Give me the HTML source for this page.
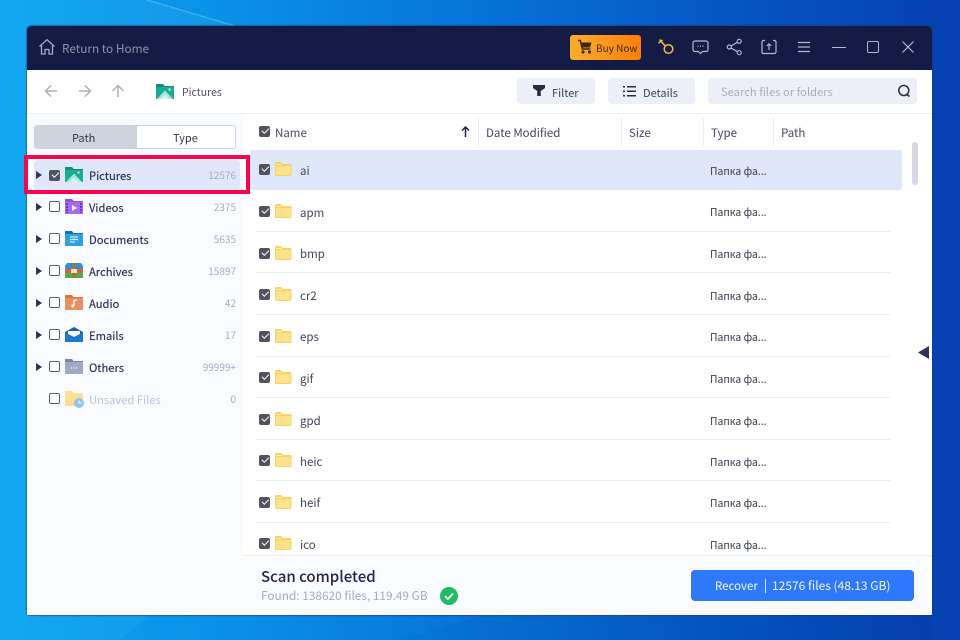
<!DOCTYPE html>
<html><head><meta charset="utf-8">
<style>
*{box-sizing:border-box;margin:0;padding:0}
html,body{width:960px;height:640px;overflow:hidden}
body{position:relative;font-family:"Noto Sans CJK SC","Liberation Sans",sans-serif;font-size:11.5px;color:#2f3350;background:linear-gradient(90deg,#0aa6f2 0%,#0a8fe6 25%,#0673d8 50%,#0557c4 75%,#063fb0 100%)}
.a{position:absolute;white-space:nowrap}
svg{position:absolute;display:block}
.t{line-height:16px;height:16px}
.cb{position:absolute;width:11px;height:11px;border-radius:2px;border:1.3px solid #5f6070;background:#fff}
.cb.on{background:#53535f;border-color:#53535f}
.cb.on:after{content:"";position:absolute;left:1.6px;top:1.2px;width:6px;height:3.2px;border-left:1.6px solid #fff;border-bottom:1.6px solid #fff;transform:rotate(-45deg)}
.tri{position:absolute;width:0;height:0;border-left:6px solid #2b3157;border-top:4px solid transparent;border-bottom:4px solid transparent}
.cnt{position:absolute;right:724px;text-align:right;color:#a5a9c6;font-size:10px;line-height:16px}
.lb{font-size:11.2px;color:#2a2e52;-webkit-text-stroke:.15px #2a2e52}
.ln{position:absolute;left:255px;width:635px;height:1px;background:#e8ecf6}
.hd{color:#4f546c;font-size:11.5px;-webkit-text-stroke:.1px #4f546c}
.sep{position:absolute;width:1px;height:28px;top:118px;background:#e9edf4}
.ty{position:absolute;left:710px;color:#474b59;font-size:10.4px;line-height:16px;-webkit-text-stroke:.1px #474b59}
.nm{position:absolute;left:300px;color:#404459;font-size:11.5px;line-height:16px}
</style></head><body>

<svg style="left:0;top:0" width="960" height="640" viewBox="0 0 960 640"><path d="M0 0H147L235 26H27V615H150L120 640H0z" fill="#fff" opacity=".04"/><path d="M147 0 235 26" stroke="#7fd0fa" stroke-width="1.500" opacity=".4" fill="none"/><path d="M400 640 480 615H932V640z" fill="#000" opacity=".03"/></svg>

<div class="a" style="left:27px;top:26px;width:905px;height:589px;background:#fff;border-radius:4px 4px 2px 2px;box-shadow:0 0 1px 1px rgba(40,50,110,.55);overflow:hidden">
</div>
<div class="a" style="left:27px;top:26px;width:905px;height:44px;background:#141c46;border-radius:4px 4px 0 0"></div>

<!-- title bar -->
<svg style="left:38px;top:38px" width="18" height="18" viewBox="0 0 18 18" fill="none" stroke="#a8adc4" stroke-width="1.3"><path d="M1.5 8.5 9 1.7l7.500 6.800M3.500 7.500V16h3.500v-4.500h4V16h3.500V7.500"/></svg>
<div class="a t" style="left:62px;top:41px;color:#8d92ab;font-size:11.8px">Return to Home</div>

<div class="a" style="left:570px;top:35px;width:71px;height:25px;border-radius:3px;background:linear-gradient(90deg,#fcae2a,#fb7d0c)"></div>
<svg style="left:577px;top:39px" width="16" height="16" viewBox="0 0 16 16"><path d="M1 1.500h2.300l2 8.500h8" fill="none" stroke="#3a2a10" stroke-width="1.500"/><path d="M4 3.500h10.500l-1.500 5H5z" fill="#3a2a10"/><circle cx="6" cy="13" r="1.600" fill="#3a2a10"/><circle cx="12.500" cy="13" r="1.600" fill="#3a2a10"/></svg>
<div class="a t" style="left:596px;top:40px;color:#40290c;font-size:10px">Buy Now</div>

<svg style="left:657px;top:38px" width="18" height="18" viewBox="0 0 18 18" fill="none" stroke="#f0b64a" stroke-width="1.500"><circle cx="11.500" cy="11" r="4.300"/><path d="M2.500 1.500 8.200 8M1.500 5 5.500 2"/></svg>
<svg style="left:692px;top:40px" width="17" height="15" viewBox="0 0 17 15" fill="none" stroke="#b4b8cb" stroke-width="1.200"><path d="M3 1h11a2 2 0 0 1 2 2v6.500a2 2 0 0 1-2 2h-3.500L8.500 13.500 6.500 11.500H3a2 2 0 0 1-2-2V3a2 2 0 0 1 2-2z"/><path d="M5.500 6.200h1M8 6.200h1M10.500 6.200h1" stroke-width="1.300"/></svg>
<svg style="left:726px;top:38px" width="17" height="18" viewBox="0 0 17 18" fill="none" stroke="#b4b8cb" stroke-width="1.200"><circle cx="3.300" cy="9" r="2"/><circle cx="13.200" cy="3.300" r="2"/><circle cx="13.200" cy="14.700" r="2"/><path d="M5 8 11.500 4.300M5 10l6.500 3.700"/></svg>
<svg style="left:761px;top:39px" width="16" height="16" viewBox="0 0 16 16" fill="none" stroke="#b4b8cb" stroke-width="1.200"><path d="M4 1.500H2.500a1.500 1.500 0 0 0-1.500 1.500v10a1.500 1.500 0 0 0 1.500 1.500h11a1.500 1.500 0 0 0 1.500-1.500V3a1.500 1.500 0 0 0-1.500-1.500H12"/><path d="M8 11V5M5.800 7 8 4.800 10.200 7"/></svg>
<svg style="left:798px;top:41px" width="12" height="12" viewBox="0 0 12 12" fill="none" stroke="#b4b8cb" stroke-width="1.200"><path d="M0 1.500h12M0 6h12M0 10.500h12"/></svg>
<div class="a" style="left:832px;top:47px;width:14px;height:1.300px;background:#b4b8cb"></div>
<div class="a" style="left:867px;top:41px;width:12px;height:12px;border:1.300px solid #b4b8cb;border-radius:2px"></div>
<svg style="left:902px;top:41px" width="12" height="12" viewBox="0 0 12 12" fill="none" stroke="#b4b8cb" stroke-width="1.200"><path d="M.5.500l11 11M11.500.500l-11 11"/></svg>

<!-- toolbar -->
<svg style="left:44px;top:84px" width="14" height="14" viewBox="0 0 14 14" fill="none" stroke="#a9adbb" stroke-width="1.400"><path d="M13 7H1.500M7 1.500 1.500 7 7 12.500"/></svg>
<svg style="left:78px;top:84px" width="14" height="14" viewBox="0 0 14 14" fill="none" stroke="#a9adbb" stroke-width="1.400"><path d="M1 7h11.500M7 1.500 12.500 7 7 12.500"/></svg>
<svg style="left:111px;top:84px" width="14" height="14" viewBox="0 0 14 14" fill="none" stroke="#a9adbb" stroke-width="1.400"><path d="M7 13V1.500M1.500 7 7 1.500 12.500 7"/></svg>
<svg style="left:156px;top:84px" width="18" height="15" viewBox="0 0 18 15"><path d="M0 0h7l1.500 2H18v13H0z" fill="#0f8f7a"/><rect y="3" width="18" height="12" fill="#1cab93"/><path d="M1 15 9 6.500 17 15z" fill="#a6e8d8"/><path d="M4.500 15 9 10.500 13.500 15z" fill="#d2f4ec"/><rect x="12.500" y="4.500" width="2" height="2" fill="#d8f4ec"/></svg>
<div class="a t" style="left:182px;top:85px;font-size:10.500px;color:#4b4f63">Pictures</div>

<div class="a" style="left:517px;top:78px;width:78px;height:26px;background:#eceff8;border-radius:4px"></div>
<svg style="left:533px;top:85px" width="12" height="11" viewBox="0 0 12 11"><path d="M0 0h12v3L7.800 6v5H4.200V6L0 3z" fill="#2a2d3f"/></svg>
<div class="a t" style="left:552px;top:85px;font-size:11px;color:#3c4055">Filter</div>
<div class="a" style="left:608px;top:78px;width:87px;height:26px;background:#eceff8;border-radius:4px"></div>
<svg style="left:623px;top:86px" width="13" height="11" viewBox="0 0 13 11" fill="#2a2d3f"><rect width="2" height="1.500"/><rect x="4" width="9" height="1.500"/><rect y="4.500" width="2" height="1.500"/><rect x="4" y="4.500" width="9" height="1.500"/><rect y="9" width="2" height="1.500"/><rect x="4" y="9" width="9" height="1.500"/></svg>
<div class="a t" style="left:643px;top:85px;font-size:11px;color:#3c4055">Details</div>
<div class="a" style="left:708px;top:78px;width:209px;height:26px;background:#eceff8;border-radius:4px"></div>
<div class="a t" style="left:721px;top:84px;font-size:11.2px;color:#a9adc0">Search files or folders</div>
<svg style="left:897px;top:84px" width="14" height="14" viewBox="0 0 14 14" fill="none" stroke="#2a2d3f" stroke-width="1.500"><circle cx="6.800" cy="6.500" r="5"/><path d="M10 10.500l2.500 2"/></svg>

<div class="a" style="left:27px;top:113px;width:905px;height:1px;background:#eaeef5"></div>

<!-- sidebar -->
<div class="a" style="left:27px;top:114px;width:216px;height:501px;background:#fafbfe"></div>
<div class="a" style="left:34px;top:125px;width:202px;height:24px;background:#cfd3de;border-radius:3px"></div>
<div class="a" style="left:137px;top:126px;width:98px;height:22px;background:#fff;border-radius:0 2px 2px 0"></div>
<div class="a t" style="left:72px;top:130px;font-size:11px;color:#33374c">Path</div>
<div class="a t" style="left:173px;top:130px;font-size:11px;color:#33374c">Type</div>

<div class="a" style="left:34px;top:160px;width:206px;height:31px;background:#dfe8fb;border-radius:4px"></div>

<div class="tri" style="left:36px;top:171px"></div>
<div class="cb on" style="left:49px;top:170px"></div>
<svg style="left:65px;top:167px" width="18" height="15" viewBox="0 0 18 15"><path d="M0 0h7l1.500 2H18v13H0z" fill="#0f8f7a"/><rect y="3" width="18" height="12" fill="#1cab93"/><path d="M1 15 9 6.500 17 15z" fill="#a6e8d8"/><path d="M4.500 15 9 10.500 13.500 15z" fill="#d2f4ec"/><rect x="12.500" y="4.500" width="2" height="2" fill="#d8f4ec"/></svg>
<div class="a t lb" style="left:89px;top:168px">Pictures</div>
<div class="cnt" style="top:167px">12576</div>

<div class="tri" style="left:36px;top:203px"></div>
<div class="cb" style="left:49px;top:201px"></div>
<svg style="left:65px;top:199px" width="18" height="15" viewBox="0 0 18 15"><path d="M0 0h7l1.500 2H18v13H0z" fill="#8f4fdc"/><rect y="3" width="18" height="12" fill="#a66df0"/><path d="M7 6l5 3-5 3z" fill="#fff"/><path d="M2 4v10M16 4v10" stroke="#6d35b8" stroke-width="2" stroke-dasharray="2 1"/></svg>
<div class="a t lb" style="left:89px;top:200px">Videos</div>
<div class="cnt" style="top:199px">2375</div>

<div class="tri" style="left:36px;top:235px"></div>
<div class="cb" style="left:49px;top:233px"></div>
<svg style="left:65px;top:231px" width="18" height="15" viewBox="0 0 18 15"><path d="M0 0h7l1.500 2H18v13H0z" fill="#1272b8"/><rect y="3" width="18" height="12" fill="#2fa0e0"/><path d="M5 6h8M5 8.500h8M5 11h5" stroke="#cfeafa" stroke-width="1.300"/></svg>
<div class="a t lb" style="left:89px;top:232px">Documents</div>
<div class="cnt" style="top:231px">5635</div>

<div class="tri" style="left:36px;top:267px"></div>
<div class="cb" style="left:49px;top:265px"></div>
<svg style="left:65px;top:263px" width="18" height="15" viewBox="0 0 18 15"><path d="M2 0h14l2 3v3H0V3z" fill="#2a90d8"/><rect y="6" width="18" height="4" fill="#dd5d3a"/><rect y="10" width="18" height="5" fill="#4fae46"/><rect x="7" width="4" height="15" fill="#a0763e"/><rect x="6" y="6" width="6" height="4" fill="#f2e3c4"/></svg>
<div class="a t lb" style="left:89px;top:264px">Archives</div>
<div class="cnt" style="top:263px">15897</div>

<div class="tri" style="left:36px;top:299px"></div>
<div class="cb" style="left:49px;top:297px"></div>
<svg style="left:65px;top:295px" width="18" height="15" viewBox="0 0 18 15"><path d="M0 0h7l1.500 2H18v13H0z" fill="#e07a2a"/><rect y="3" width="18" height="12" fill="#e89060"/><path d="M9 11V5.500l3 -.5" fill="none" stroke="#fff" stroke-width="1.300"/><circle cx="7.800" cy="11" r="1.500" fill="#fff"/></svg>
<div class="a t lb" style="left:89px;top:296px">Audio</div>
<div class="cnt" style="top:295px">42</div>

<div class="tri" style="left:36px;top:331px"></div>
<div class="cb" style="left:49px;top:329px"></div>
<svg style="left:65px;top:327px" width="18" height="15" viewBox="0 0 18 15"><path d="M0 5 9 0l9 5v10H0z" fill="#1564b4"/><path d="M3 4h12v3l-6 3-6-3z" fill="#fff"/><path d="M0 6l9 4.500L18 6v9H0z" fill="#1d78d0"/></svg>
<div class="a t lb" style="left:89px;top:328px">Emails</div>
<div class="cnt" style="top:327px">17</div>

<div class="tri" style="left:36px;top:363px"></div>
<div class="cb" style="left:49px;top:361px"></div>
<svg style="left:65px;top:359px" width="18" height="15" viewBox="0 0 18 15"><path d="M0 0h7l1.500 2H18v13H0z" fill="#7a84a4"/><rect y="3" width="18" height="12" fill="#a0a9c4"/><path d="M6 9h1M8.500 9h1M11 9h1" stroke="#fff" stroke-width="1.200"/></svg>
<div class="a t lb" style="left:89px;top:360px">Others</div>
<div class="cnt" style="top:359px">99999+</div>

<div class="cb" style="left:49px;top:393px"></div>
<svg style="left:65px;top:391px" width="20" height="18" viewBox="0 0 20 18"><path d="M0 0h7l1.500 2H18v13H0z" fill="#fbdf95"/><circle cx="14" cy="12" r="5" fill="#8cc4f2"/><path d="M14 9.500V12h2.500" fill="none" stroke="#fff" stroke-width="1.100"/></svg>
<div class="a t" style="left:89px;top:392px;font-size:11.2px;color:#bcc0d6">Unsaved Files</div>
<div class="cnt" style="top:391px">0</div>

<!-- highlight -->
<div class="a" style="left:24px;top:155px;width:226px;height:39px;border:4px solid #f9034f"></div>

<!-- table header -->
<div class="cb on" style="left:259px;top:126px"></div>
<div class="a t hd" style="left:275px;top:125px">Name</div>
<svg style="left:461px;top:126px" width="9" height="11" viewBox="0 0 9 11" fill="none" stroke="#1f2440" stroke-width="1.500"><path d="M4.500 11V1.500M1 4.500 4.500 1 8 4.500"/></svg>
<div class="sep" style="left:478px"></div>
<div class="a t hd" style="left:486px;top:125px">Date Modified</div>
<div class="sep" style="left:621px"></div>
<div class="a t hd" style="left:629px;top:125px">Size</div>
<div class="sep" style="left:703px"></div>
<div class="a t hd" style="left:711px;top:125px">Type</div>
<div class="sep" style="left:773px"></div>
<div class="a t hd" style="left:781px;top:125px">Path</div>

<!-- rows -->
<div class="a" style="left:250px;top:150px;width:652px;height:40px;background:#dfe8fb;border-radius:3px"></div>
<div class="a" style="left:912px;top:142px;width:6px;height:43px;background:#d5d8e2;border-radius:3px"></div>

<div class="ln" style="top:231px"></div>
<div class="ln" style="top:272px"></div>
<div class="ln" style="top:314px"></div>
<div class="ln" style="top:356px"></div>
<div class="ln" style="top:397px"></div>
<div class="ln" style="top:439px"></div>
<div class="ln" style="top:480px"></div>
<div class="ln" style="top:522px"></div>

<svg width="0" height="0"><defs><g id="f"><path d="M0 1.500A1.500 1.500 0 0 1 1.500 0H6l1.500 2h7.500A1.500 1.500 0 0 1 16.500 3.500V12.500A1.500 1.500 0 0 1 15 14H1.500A1.500 1.500 0 0 1 0 12.500z" fill="#fbd15e"/><rect x="1" y="4" width="14.500" height="9" rx="1" fill="#fde28e"/><rect x="1.500" y="2" width="5" height="1" fill="#fff3c6"/></g></defs></svg>

<div class="cb on" style="left:259px;top:164px"></div><svg style="left:275px;top:162px" width="17" height="15"><use href="#f"/></svg><div class="nm" style="top:163px">ai</div><div class="ty" style="top:163px">Папка фа...</div>
<div class="cb on" style="left:259px;top:206px"></div><svg style="left:275px;top:204px" width="17" height="15"><use href="#f"/></svg><div class="nm" style="top:205px">apm</div><div class="ty" style="top:204px">Папка фа...</div>
<div class="cb on" style="left:259px;top:248px"></div><svg style="left:275px;top:246px" width="17" height="15"><use href="#f"/></svg><div class="nm" style="top:246px">bmp</div><div class="ty" style="top:246px">Папка фа...</div>
<div class="cb on" style="left:259px;top:289px"></div><svg style="left:275px;top:287px" width="17" height="15"><use href="#f"/></svg><div class="nm" style="top:288px">cr2</div><div class="ty" style="top:288px">Папка фа...</div>
<div class="cb on" style="left:259px;top:331px"></div><svg style="left:275px;top:329px" width="17" height="15"><use href="#f"/></svg><div class="nm" style="top:329px">eps</div><div class="ty" style="top:329px">Папка фа...</div>
<div class="cb on" style="left:259px;top:372px"></div><svg style="left:275px;top:370px" width="17" height="15"><use href="#f"/></svg><div class="nm" style="top:371px">gif</div><div class="ty" style="top:371px">Папка фа...</div>
<div class="cb on" style="left:259px;top:414px"></div><svg style="left:275px;top:412px" width="17" height="15"><use href="#f"/></svg><div class="nm" style="top:413px">gpd</div><div class="ty" style="top:413px">Папка фа...</div>
<div class="cb on" style="left:259px;top:455px"></div><svg style="left:275px;top:453px" width="17" height="15"><use href="#f"/></svg><div class="nm" style="top:454px">heic</div><div class="ty" style="top:454px">Папка фа...</div>
<div class="cb on" style="left:259px;top:497px"></div><svg style="left:275px;top:495px" width="17" height="15"><use href="#f"/></svg><div class="nm" style="top:495px">heif</div><div class="ty" style="top:495px">Папка фа...</div>
<div class="cb on" style="left:259px;top:538px"></div><svg style="left:275px;top:536px" width="17" height="15"><use href="#f"/></svg><div class="nm" style="top:537px">ico</div><div class="ty" style="top:537px">Папка фа...</div>

<svg style="left:918px;top:346px" width="12" height="14" viewBox="0 0 12 14"><path d="M11 0v13L0 6.500z" fill="#2b3157"/></svg>

<!-- footer -->
<div class="a" style="left:243px;top:555px;width:689px;height:60px;background:#fafbfe;border-top:1px solid #e9edf5"></div>
<div class="a" style="left:261px;top:568px;font-size:15px;line-height:18px;color:#20254a;font-weight:500">Scan completed</div>
<div class="a t" style="left:261px;top:588px;font-size:11.85px;color:#a5a9c6">Found: 138620 files, 119.49 GB</div>
<svg style="left:440px;top:587px" width="18" height="18" viewBox="0 0 18 18"><circle cx="9" cy="9" r="9" fill="#1fbb67"/><path d="M5 9.200 8 12l5-5.500" fill="none" stroke="#fff" stroke-width="1.800"/></svg>

<div class="a" style="left:691px;top:570px;width:223px;height:31px;background:#2e79fb;border-radius:4px"></div>
<div class="a t" style="left:715px;top:578px;font-size:11.500px;color:#f2f6ff">Recover</div>
<div class="a" style="left:765px;top:579px;width:1px;height:14px;background:#dbe7ff"></div>
<div class="a t" style="left:772px;top:578px;font-size:12px;color:#f2f6ff">12576 files (48.13 GB)</div>

</body></html>
